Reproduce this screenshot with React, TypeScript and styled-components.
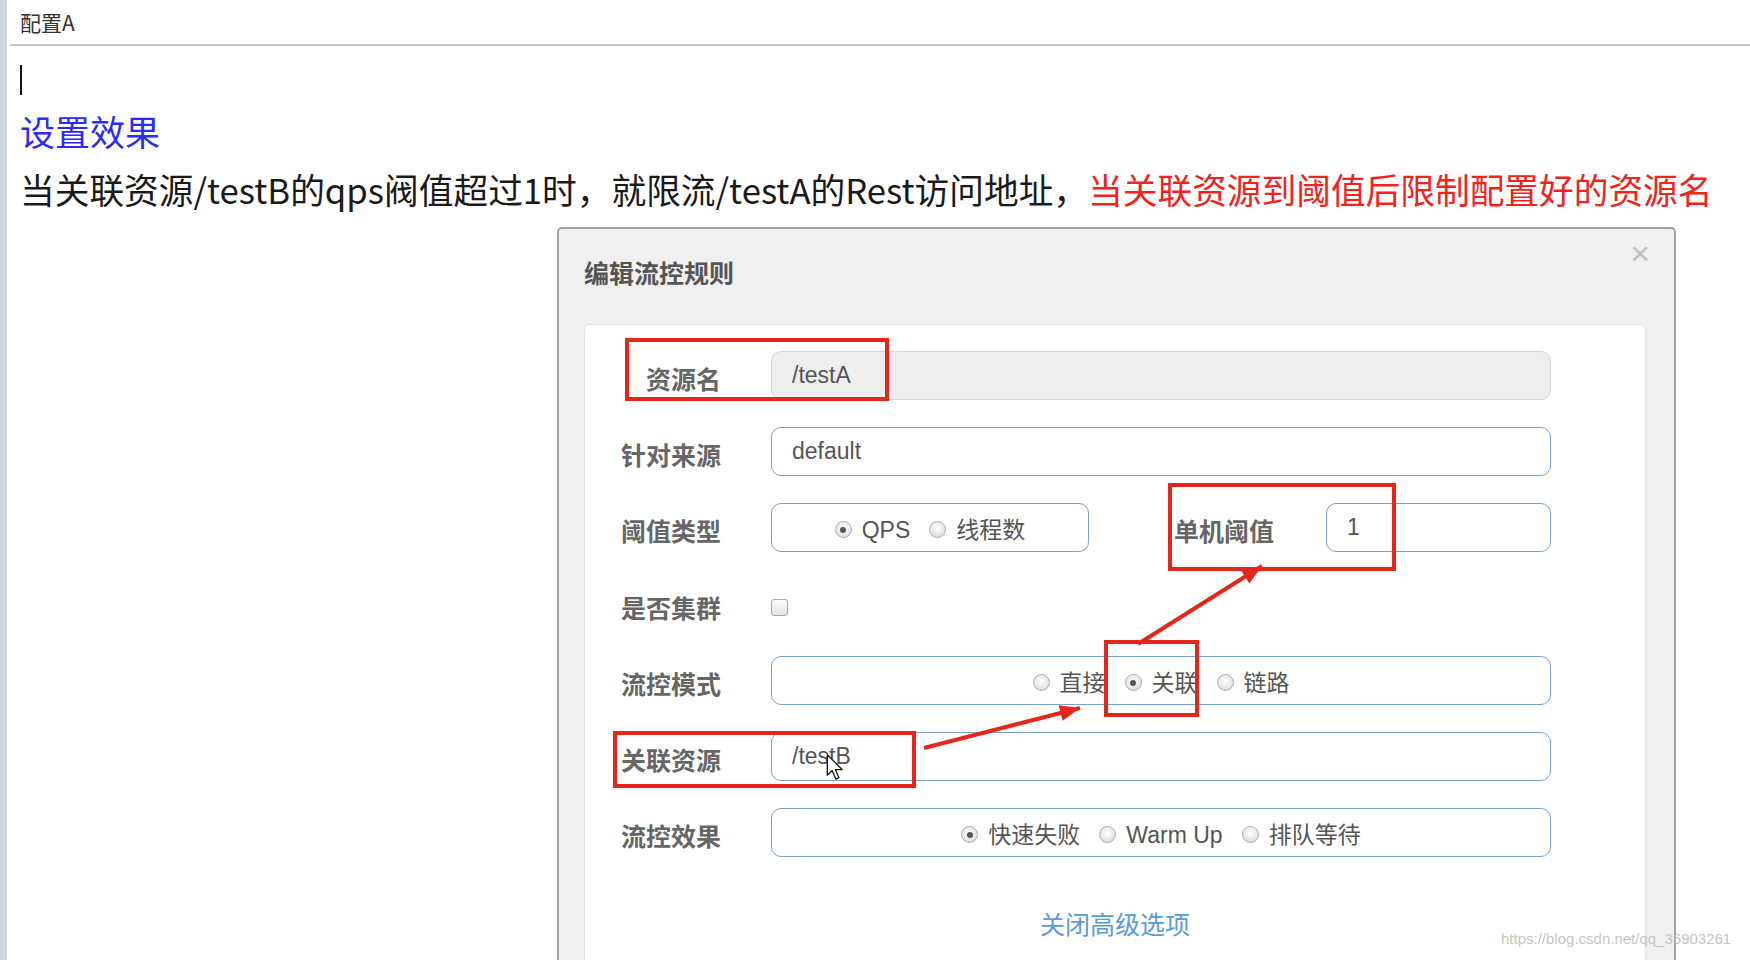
import React from 'react';
import styled, { createGlobalStyle } from 'styled-components';

const GlobalStyle = createGlobalStyle`
  html, body {
    margin: 0;
    padding: 0;
    overflow: hidden;
    background: #fff;
  }

  body {
    font-family: "Noto Sans CJK SC", sans-serif;
  }
`;

const Page = styled.div`
  position: relative;
  display: flex;
  width: 1750px;
  height: 960px;
  overflow: hidden;
`;

const SideStrip = styled.div`
  width: 7px;
  flex-shrink: 0;
  background: #cfd6e0;
`;

const Main = styled.div`
  flex: 1;
  padding-left: 3px;
`;

const TabHeader = styled.div`
  height: 44px;
  display: flex;
  align-items: center;
  padding-left: 10px;
  border-bottom: 2px solid #c9c9c9;
  font-size: 21px;
  color: #333;
`;

const Content = styled.div`
  padding-left: 10px;
`;

const Caret = styled.div`
  width: 2px;
  height: 30px;
  margin-top: 19px;
  background: #111;
`;

const Heading = styled.div`
  margin-top: 15px;
  font-size: 35px;
  line-height: 42px;
  color: #2b2bf5;
`;

const Sentence = styled.div`
  margin-top: 13px;
  font-size: 34.7px;
  line-height: 48px;
  color: #1a1a1a;
  white-space: nowrap;
`;

const RedText = styled.span`
  color: #f2221c;
`;

const Dialog = styled.div`
  box-sizing: border-box;
  width: 1119px;
  height: 760px;
  margin: 14px 0 0 537px;
  padding: 0 28px 0 25px;
  border: 2px solid #a3a3a3;
  border-bottom: none;
  border-radius: 5px 5px 0 0;
  background: #f0f0f0;
`;

const DialogHeader = styled.div`
  height: 95px;
  display: flex;
  justify-content: space-between;
  align-items: flex-start;
`;

const DialogTitle = styled.div`
  margin-top: 28px;
  font-size: 25px;
  line-height: 30px;
  font-weight: bold;
  color: #555;
`;

const CloseButton = styled.div`
  margin-top: 7px;
  margin-right: -4px;
  font-family: "Liberation Sans", sans-serif;
  font-size: 34px;
  line-height: 1;
  color: #c2c2c2;
`;

const Panel = styled.div`
  padding-top: 26px;
  height: 700px;
  background: #fff;
  border: 1px solid #e4e4e4;
  border-radius: 6px;
`;

const Fields = styled.div`
  display: flex;
  flex-direction: column;
  gap: 27px;
  padding: 0 94px 0 35px;
`;

const Row = styled.div<{ $height?: number }>`
  display: grid;
  grid-template-columns: 151px 1fr;
  align-items: center;
  height: ${(p) => p.$height ?? 49}px;
`;

const Label = styled.div`
  padding: 5px 50px 0 0;
  text-align: right;
  font-size: 25px;
  font-weight: bold;
  color: #666;
  white-space: nowrap;
`;

const TextInput = styled.input<{ $disabled?: boolean; $width?: number }>`
  box-sizing: border-box;
  width: ${(p) => (p.$width ? `${p.$width}px` : '100%')};
  height: 49px;
  padding: 0 20px;
  border: 1.5px solid ${(p) => (p.$disabled ? '#d6d6d6' : '#7ba2cc')};
  border-radius: 10px;
  background: ${(p) => (p.$disabled ? '#eeeeee' : '#fff')};
  font-family: "Liberation Sans", "Noto Sans CJK SC", sans-serif;
  font-size: 23px;
  color: #555;
  outline: none;
`;

const RadioBox = styled.div<{ $width?: number }>`
  box-sizing: border-box;
  width: ${(p) => (p.$width ? `${p.$width}px` : '100%')};
  height: 49px;
  display: flex;
  justify-content: center;
  align-items: baseline;
  gap: 19px;
  padding-top: 11px;
  border: 1.5px solid #7ba2cc;
  border-radius: 10px;
`;

const RadioItem = styled.label`
  line-height: 30px;
  white-space: nowrap;
  font-family: "Liberation Sans", "Noto Sans CJK SC", sans-serif;
  font-size: 23px;
  color: #555;
`;

const RadioDot = styled.span<{ $checked?: boolean }>`
  position: relative;
  display: inline-block;
  box-sizing: border-box;
  width: 17px;
  height: 17px;
  margin-right: 10px;
  vertical-align: 0;
  border-radius: 50%;
  border: 1px solid #b0b0b0;
  background: radial-gradient(circle at 50% 40%, #ffffff, #d4d4d4);

  &::after {
    content: '';
    display: ${(p) => (p.$checked ? 'block' : 'none')};
    position: absolute;
    left: 4.5px;
    top: 4.5px;
    width: 6px;
    height: 6px;
    border-radius: 50%;
    background: #555;
  }
`;

const ThresholdCell = styled.div`
  display: flex;
  align-items: center;
`;

const SubLabel = styled(Label)`
  width: 152px;
  box-sizing: border-box;
  margin-left: 85px;
  padding: 5px 0 0 0;
  text-align: left;
`;

const Checkbox = styled.span`
  box-sizing: border-box;
  width: 17px;
  height: 17px;
  margin-top: 6px;
  border: 1px solid #a9a9a9;
  border-radius: 3px;
  background: linear-gradient(#fdfdfd, #e4e4e4);
`;

const AdvancedLink = styled.div`
  margin-top: 51px;
  text-align: center;
  font-size: 25px;
  line-height: 30px;
  color: #5b9bd5;
`;

const Mark = styled.div<{ $x: number; $y: number; $w: number; $h: number }>`
  position: absolute;
  left: ${(p) => p.$x}px;
  top: ${(p) => p.$y}px;
  width: ${(p) => p.$w}px;
  height: ${(p) => p.$h}px;
  box-sizing: border-box;
  border: 4px solid #e4261b;
  pointer-events: none;
`;

const ArrowLayer = styled.svg`
  position: absolute;
  left: 0;
  top: 0;
  pointer-events: none;
`;

const Pointer = styled.svg`
  position: absolute;
  left: 826px;
  top: 753px;
`;

const Watermark = styled.div`
  position: absolute;
  left: 1501px;
  top: 930px;
  font-family: "Liberation Sans", sans-serif;
  font-size: 15px;
  color: rgba(190, 190, 190, 0.9);
`;

type Radio = { text: string; checked?: boolean };

const RadioGroup = ({ items, width }: { items: Radio[]; width?: number }) => (
  <RadioBox $width={width}>
    {items.map((item) => (
      <RadioItem key={item.text}>
        <RadioDot $checked={item.checked} />
        {item.text}
      </RadioItem>
    ))}
  </RadioBox>
);

const arrowHead = (x1: number, y1: number, x2: number, y2: number) => {
  const len = Math.hypot(x2 - x1, y2 - y1);
  const ux = (x2 - x1) / len;
  const uy = (y2 - y1) / len;
  const bx = x2 - ux * 20;
  const by = y2 - uy * 20;
  const px = -uy * 8;
  const py = ux * 8;
  return `${x2},${y2} ${bx + px},${by + py} ${bx - px},${by - py}`;
};

const arrows = [
  { x1: 924, y1: 748, x2: 1080, y2: 708 },
  { x1: 1138, y1: 644, x2: 1262, y2: 566 },
];

const App = () => {
  return (
    <>
      <GlobalStyle />
      <Page>
        <SideStrip />
        <Main>
          <TabHeader>配置A</TabHeader>
          <Content>
            <Caret />
            <Heading>设置效果</Heading>
            <Sentence>
              当关联资源/testB的qps阀值超过1时，就限流/testA的Rest访问地址，
              <RedText>当关联资源到阈值后限制配置好的资源名</RedText>
            </Sentence>
            <Dialog>
              <DialogHeader>
                <DialogTitle>编辑流控规则</DialogTitle>
                <CloseButton>×</CloseButton>
              </DialogHeader>
              <Panel>
                <Fields>
                  <Row>
                    <Label>资源名</Label>
                    <TextInput $disabled readOnly defaultValue="/testA" />
                  </Row>
                  <Row>
                    <Label>针对来源</Label>
                    <TextInput readOnly defaultValue="default" />
                  </Row>
                  <Row>
                    <Label>阈值类型</Label>
                    <ThresholdCell>
                      <RadioGroup
                        width={318}
                        items={[{ text: 'QPS', checked: true }, { text: '线程数' }]}
                      />
                      <SubLabel>单机阈值</SubLabel>
                      <TextInput $width={225} readOnly defaultValue="1" />
                    </ThresholdCell>
                  </Row>
                  <Row $height={50}>
                    <Label>是否集群</Label>
                    <Checkbox />
                  </Row>
                  <Row>
                    <Label>流控模式</Label>
                    <RadioGroup
                      items={[{ text: '直接' }, { text: '关联', checked: true }, { text: '链路' }]}
                    />
                  </Row>
                  <Row>
                    <Label>关联资源</Label>
                    <TextInput readOnly defaultValue="/testB" />
                  </Row>
                  <Row>
                    <Label>流控效果</Label>
                    <RadioGroup
                      items={[
                        { text: '快速失败', checked: true },
                        { text: 'Warm Up' },
                        { text: '排队等待' },
                      ]}
                    />
                  </Row>
                </Fields>
                <AdvancedLink>关闭高级选项</AdvancedLink>
              </Panel>
            </Dialog>
          </Content>
        </Main>

        <Mark $x={625} $y={338} $w={264} $h={63} />
        <Mark $x={1168} $y={483} $w={228} $h={88} />
        <Mark $x={1104} $y={640} $w={95} $h={77} />
        <Mark $x={613} $y={731} $w={303} $h={57} />

        <ArrowLayer width={1750} height={960}>
          {arrows.map((a) => (
            <g key={a.x1}>
              <line x1={a.x1} y1={a.y1} x2={a.x2} y2={a.y2} stroke="#e4261b" strokeWidth={4} />
              <polygon points={arrowHead(a.x1, a.y1, a.x2, a.y2)} fill="#e4261b" />
            </g>
          ))}
        </ArrowLayer>

        <Pointer width={18} height={29} viewBox="0 0 14 22">
          <path
            d="M1 1 L1 17 L4.8 13.4 L7.6 20 L10 19 L7.3 12.6 L12.5 12.6 Z"
            fill="#fff"
            stroke="#111"
            strokeWidth={1}
            strokeLinejoin="round"
          />
        </Pointer>

        <Watermark>https://blog.csdn.net/qq_36903261</Watermark>
      </Page>
    </>
  );
};

export default App;
